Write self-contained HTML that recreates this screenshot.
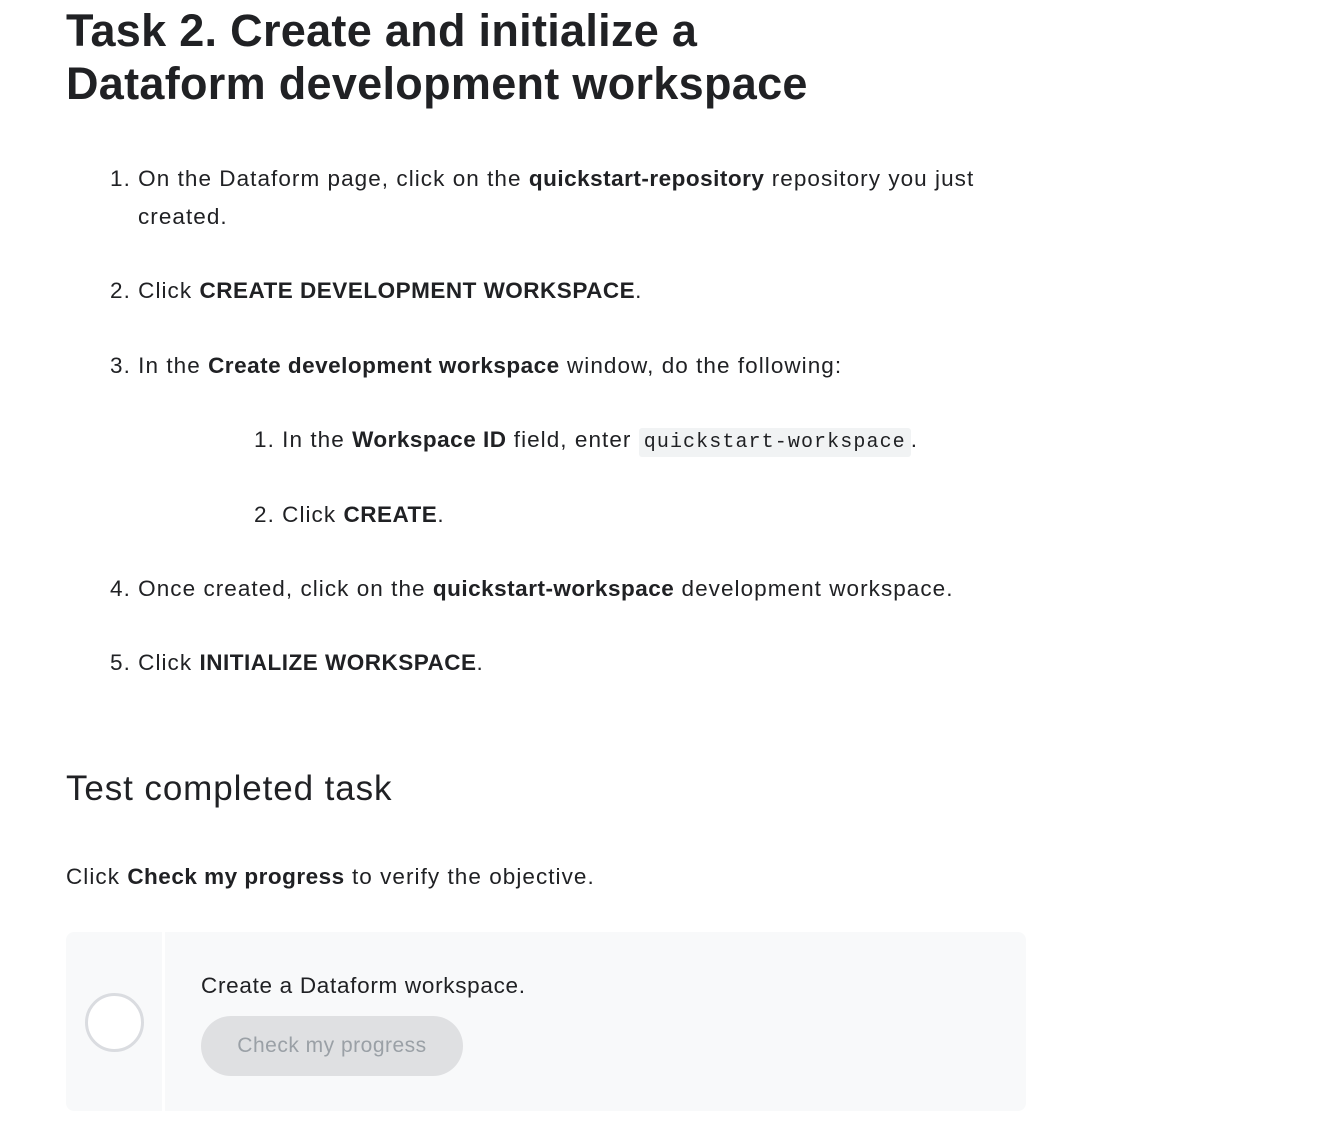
<!DOCTYPE html>
<html><head><meta charset="utf-8"><style>
body{margin:0;width:1324px;height:1135px;background:#fff;font-family:"Liberation Sans",sans-serif;color:#202124;position:relative;overflow:hidden}
.a{position:absolute;white-space:nowrap;font-size:22.5px;line-height:30px;letter-spacing:1.05px}
h1{position:absolute;left:66px;top:4px;margin:0;font-size:45px;line-height:53px;font-weight:bold;letter-spacing:0.3px}
b{font-weight:bold;letter-spacing:0.5px}
code{font-family:"Liberation Mono",monospace;font-size:20px;background:#f1f3f4;padding:3px 5px;border-radius:3px;letter-spacing:1.1px;margin-left:0px}
.card{position:absolute;left:66px;top:932px;width:960px;height:179px;background:#f8f9fa;border-radius:8px}
.sep{position:absolute;left:96px;top:0;width:3px;height:179px;background:#fff}
.circ{position:absolute;left:19px;top:61px;border:3px solid #dadce0;border-radius:50%;background:#fff;box-sizing:border-box;width:59px;height:59px}
.btn{position:absolute;left:135px;top:84px;width:262px;height:60px;border-radius:30px;background:#dfe0e2;color:#9aa0a6;font-size:21px;line-height:60px;text-align:center;letter-spacing:0.5px}
</style></head><body>
<h1>Task 2. Create and initialize a<br>Dataform development workspace</h1>
<div class="a" style="left:110px;top:164px">1. On the Dataform page, click on the <b>quickstart-repository</b> repository you just</div>
<div class="a" style="left:138px;top:202px">created.</div>
<div class="a" style="left:110px;top:276px">2. Click <b>CREATE DEVELOPMENT WORKSPACE</b>.</div>
<div class="a" style="left:110px;top:351px">3. In the <b>Create development workspace</b> window, do the following:</div>
<div class="a" style="left:254px;top:425px">1. In the <b>Workspace ID</b> field, enter <code>quickstart-workspace</code>.</div>
<div class="a" style="left:254px;top:500px">2. Click <b>CREATE</b>.</div>
<div class="a" style="left:110px;top:574px">4. Once created, click on the <b>quickstart-workspace</b> development workspace.</div>
<div class="a" style="left:110px;top:648px">5. Click <b>INITIALIZE WORKSPACE</b>.</div>
<div class="a" style="left:66px;top:768px;font-size:35px;line-height:42px;letter-spacing:0.9px">Test completed task</div>
<div class="a" style="left:66px;top:862px">Click <b>Check my progress</b> to verify the objective.</div>
<div class="card"><div class="sep"></div><div class="circ"></div>
<div class="a" style="left:135px;top:39px;letter-spacing:0.7px">Create a Dataform workspace.</div>
<div class="btn">Check my progress</div></div>
</body></html>
